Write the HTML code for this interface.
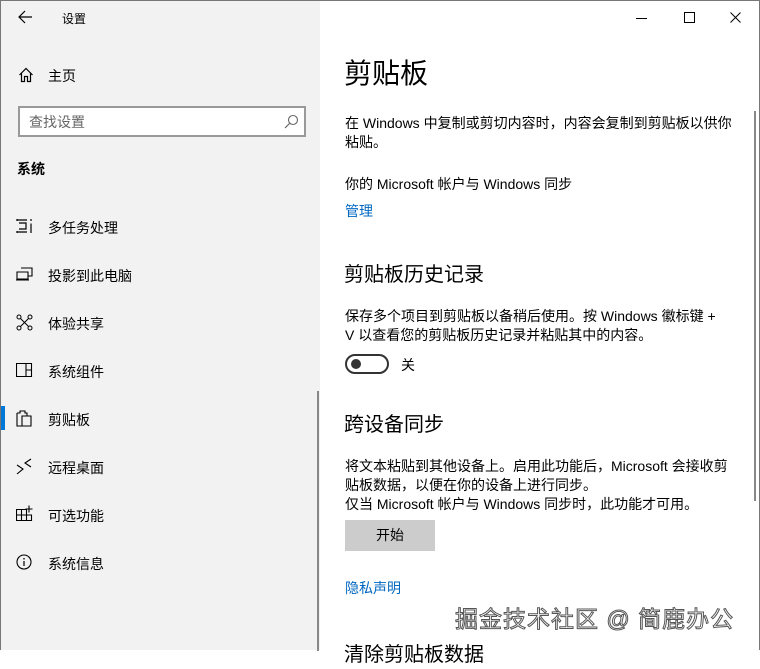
<!DOCTYPE html>
<html><head><meta charset="utf-8"><style>
*{margin:0;padding:0;box-sizing:border-box}
body{width:760px;height:650px;overflow:hidden;font-family:"Liberation Sans","Noto Sans CJK SC",sans-serif;color:#000;position:relative;background:#fff}
.left{position:absolute;left:0;top:0;width:320px;height:650px;background:#f2f2f2;border-left:1px solid #777;border-top:1px solid #777}
.right{position:absolute;left:320px;top:0;width:440px;height:650px;background:#fff;border-top:1px solid #777;border-right:1px solid #777}
.abs{position:absolute;white-space:nowrap}
.nav{position:absolute;left:47px;font-size:14px}
.ic{position:absolute;left:15px}
.p{position:absolute;left:25px;font-size:14px;line-height:19px;color:#000}
.link{color:#0067c0}
</style></head><body>
<div class="left">
 <svg class="ic" style="left:16px;top:9px" width="16" height="14" viewBox="0 0 16 14"><path d="M8 1L2 7L8 13M2 7H15" fill="none" stroke="#000" stroke-width="1.2"/></svg>
 <div class="abs" style="left:61px;top:9px;font-size:12px">设置</div>
 <svg class="ic" style="left:17px;top:66px" width="16" height="16" viewBox="0 0 16 16"><path d="M1.5 8L8 1.5L14.5 8M3.5 6.5V14.5H6.5V9.5H9.5V14.5H12.5V6.5" fill="none" stroke="#000" stroke-width="1.2"/></svg>
 <div class="nav" style="top:65px">主页</div>
 <div class="abs" style="left:17px;top:105px;width:288px;height:31px;border:2px solid #999;background:#fff"></div>
 <div class="abs" style="left:28px;top:111px;font-size:14px;color:#666">查找设置</div>
 <svg class="abs" style="left:283px;top:113px" width="15" height="15" viewBox="0 0 15 15"><circle cx="9" cy="6" r="4.5" fill="none" stroke="#666" stroke-width="1.1"/><path d="M6 9L1 14" stroke="#666" stroke-width="1.2"/></svg>
 <div class="abs" style="left:16px;top:158px;font-size:14px;font-weight:bold">系统</div>

 <svg class="ic" style="top:217px" width="17" height="16" viewBox="0 0 17 16"><path d="M1 1V3M1 13V15M1 2H11M1 14H11M3 5H10V11H3M15 1V3M15 5.5V15" fill="none" stroke="#000" stroke-width="1.2"/></svg>
 <div class="nav" style="top:217px">多任务处理</div>
 <svg class="ic" style="top:266px" width="17" height="14" viewBox="0 0 17 14"><path d="M5 1H16V9H12M1 5H12V12H1ZM0 13H13" fill="none" stroke="#000" stroke-width="1.1"/></svg>
 <div class="nav" style="top:265px">投影到此电脑</div>
 <svg class="ic" style="top:313px" width="17" height="17" viewBox="0 0 17 17"><circle cx="3" cy="3" r="2" fill="none" stroke="#000"/><circle cx="14" cy="3" r="2" fill="none" stroke="#000"/><circle cx="3" cy="14" r="2" fill="none" stroke="#000"/><circle cx="14" cy="14" r="2" fill="none" stroke="#000"/><path d="M4.5 4.5L12.5 12.5M12.5 4.5L4.5 12.5" stroke="#000"/></svg>
 <div class="nav" style="top:313px">体验共享</div>
 <svg class="ic" style="top:362px" width="17" height="14" viewBox="0 0 17 14"><path d="M.5 .5H15.5V13.5H.5ZM10 .5V13.5M10 7H15.5" fill="none" stroke="#000" stroke-width="1.1"/></svg>
 <div class="nav" style="top:361px">系统组件</div>
 <div class="abs" style="left:0;top:405px;width:4px;height:24px;background:#0078d7"></div>
 <svg class="ic" style="top:409px" width="16" height="17" viewBox="0 0 16 17"><path d="M1 3H4V1H9V3H11V6M1 3V16H6M6 6H15V16H6Z" fill="none" stroke="#000" stroke-width="1.1"/></svg>
 <div class="nav" style="top:409px">剪贴板</div>
 <svg class="ic" style="top:457px" width="17" height="17" viewBox="0 0 17 17"><path d="M1 7L7 11L1 16M15 1L9 5L15 9" fill="none" stroke="#000" stroke-width="1.1"/></svg>
 <div class="nav" style="top:457px">远程桌面</div>
 <svg class="ic" style="top:504px" width="17" height="17" viewBox="0 0 17 17"><path d="M.5 4.5H10.5V15.5H.5ZM.5 10H10.5M5.5 4.5V15.5M10.5 10H15.5V15.5H10.5M13 .5V7.5M9.5 4H16.5" fill="none" stroke="#000" stroke-width="1.1"/></svg>
 <div class="nav" style="top:505px">可选功能</div>
 <svg class="ic" style="top:553px" width="16" height="16" viewBox="0 0 16 16"><circle cx="8" cy="8" r="7" fill="none" stroke="#000" stroke-width="1.1"/><path d="M8 7V12" stroke="#000" stroke-width="1.2"/><circle cx="8" cy="4.8" r=".8"/></svg>
 <div class="nav" style="top:553px">系统信息</div>
 <div class="abs" style="left:316px;top:390px;width:2px;height:260px;background:#888"></div>
</div>
<div class="right">
 <svg class="abs" style="left:316px;top:17px" width="12" height="2"><rect width="11" height="1" fill="#000"/></svg>
 <svg class="abs" style="left:364px;top:11px" width="12" height="12"><rect x=".5" y=".5" width="10" height="10" fill="none" stroke="#000"/></svg>
 <svg class="abs" style="left:410px;top:11px" width="12" height="12"><path d="M.5 .5L10.5 10.5M10.5 .5L.5 10.5" stroke="#000"/></svg>
 <div class="abs" style="left:24px;top:54px;font-size:28px;line-height:38px">剪贴板</div>
 <div class="p" style="top:113px;width:396px;white-space:normal">在 Windows 中复制或剪切内容时，内容会复制到剪贴板以供你粘贴。</div>
 <div class="p abs" style="top:174px">你的 Microsoft 帐户与 Windows 同步</div>
 <div class="p abs link" style="top:201px">管理</div>
 <div class="abs" style="left:24px;top:260px;font-size:20px;line-height:28px">剪贴板历史记录</div>
 <div class="p" style="top:306px;width:396px">保存多个项目到剪贴板以备稍后使用。按 Windows 徽标键 +<br>V 以查看您的剪贴板历史记录并粘贴其中的内容。</div>
 <div class="abs" style="left:25px;top:353px;width:44px;height:20px;border:2px solid #333;border-radius:10px"></div>
 <div class="abs" style="left:31px;top:358px;width:10px;height:10px;border-radius:5px;background:#333"></div>
 <div class="p abs" style="left:81px;top:355px">关</div>
 <div class="abs" style="left:24px;top:410px;font-size:20px;line-height:28px">跨设备同步</div>
 <div class="p" style="top:456px;width:396px;white-space:nowrap">将文本粘贴到其他设备上。启用此功能后，Microsoft 会接收剪<br>贴板数据，以便在你的设备上进行同步。<br>仅当 Microsoft 帐户与 Windows 同步时，此功能才可用。</div>
 <div class="abs" style="left:25px;top:519px;width:90px;height:31px;background:#ccc;font-size:14px;text-align:center;line-height:31px">开始</div>
 <div class="p abs link" style="top:578px">隐私声明</div>
 <div class="abs" style="left:24px;top:640px;font-size:20px;line-height:28px">清除剪贴板数据</div>
 <div class="abs" style="left:434px;top:110px;width:2px;height:390px;background:#888"></div>
 <div class="abs" style="left:135px;top:599px;font-size:23px;color:#fff;-webkit-text-stroke:1px #555;letter-spacing:1px">掘金技术社区 @ 简鹿办公</div>
</div>
</body></html>
